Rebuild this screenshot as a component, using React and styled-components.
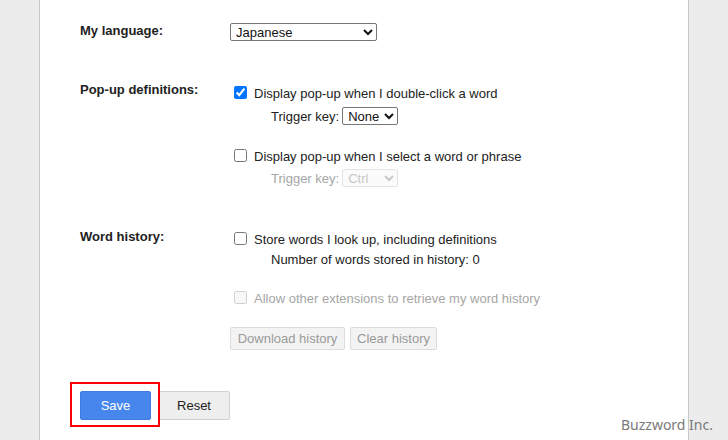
import React from 'react';
import styled, { createGlobalStyle } from 'styled-components';

const GlobalStyle = createGlobalStyle`
  html, body {
    margin: 0;
    padding: 0;
    background: #ececec;
  }
  body {
    font-family: "Liberation Sans", Arial, sans-serif;
    font-size: 13px;
    color: #222;
  }
`;

const App = () => {
  return (
    <>
      <GlobalStyle />
      <Page>
        <Panel>
          <Row>
            <Label>My language:</Label>
            <div>
              <Select width={147} defaultValue="ja">
                <option value="en">English</option>
                <option value="ja">Japanese</option>
              </Select>
            </div>
          </Row>

          <Row top={43}>
            <Label lift={2}>Pop-up definitions:</Label>
            <div>
              <CheckLine>
                <input type="checkbox" defaultChecked />
                <span>Display pop-up when I double-click a word</span>
              </CheckLine>
              <SubLine top={7}>
                Trigger key:
                <Select width={56} defaultValue="none">
                  <option value="none">None</option>
                  <option value="ctrl">Ctrl</option>
                </Select>
              </SubLine>

              <CheckLine top={22}>
                <input type="checkbox" />
                <span>Display pop-up when I select a word or phrase</span>
              </CheckLine>
              <SubLine top={6} disabled>
                Trigger key:
                <Select width={56} disabled defaultValue="ctrl">
                  <option value="ctrl">Ctrl</option>
                </Select>
              </SubLine>
            </div>
          </Row>

          <Row top={43}>
            <Label lift={1}>Word history:</Label>
            <div>
              <CheckLine>
                <input type="checkbox" />
                <span>Store words I look up, including definitions</span>
              </CheckLine>
              <SubLine top={5}>Number of words stored in history: 0</SubLine>

              <CheckLine top={22} disabled>
                <input type="checkbox" disabled />
                <span>Allow other extensions to retrieve my word history</span>
              </CheckLine>

              <HistoryButtons>
                <SmallButton width={115} disabled>Download history</SmallButton>
                <SmallButton width={87} disabled>Clear history</SmallButton>
              </HistoryButtons>
            </div>
          </Row>

          <Actions>
            <Highlight />
            <PrimaryButton>Save</PrimaryButton>
            <SecondaryButton>Reset</SecondaryButton>
          </Actions>
        </Panel>
        <Watermark>Buzzword Inc.</Watermark>
      </Page>
    </>
  );
};

export default App;

/* --- layout --- */

const Page = styled.div`
  position: relative;
  height: 440px;
  overflow: hidden;
  background: #ececec;
`;

const Panel = styled.div`
  box-sizing: border-box;
  margin: 0 39px;
  height: 440px;
  padding-top: 23px;
  background: #fff;
  border-left: 1px solid #c9c9c9;
  border-right: 1px solid #c9c9c9;
`;

const Row = styled.div`
  display: grid;
  grid-template-columns: 150px 1fr;
  padding-left: 40px;
  margin-top: ${p => p.top || 0}px;
`;

const Label = styled.div`
  font-weight: bold;
  line-height: 16px;
  color: #222;
  margin-top: ${p => -(p.lift || 0)}px;
`;

const CheckLine = styled.label`
  display: flex;
  align-items: center;
  height: 16px;
  margin-top: ${p => p.top || 0}px;
  color: ${p => (p.disabled ? '#a6a6a6' : '#222')};

  input {
    width: 13px;
    height: 13px;
    margin: 0 3px 0 4px;
  }

  span {
    margin-left: 4px;
    padding-top: 2px;
  }
`;

const SubLine = styled.div`
  display: flex;
  align-items: center;
  gap: 3px;
  min-height: 16px;
  margin-top: ${p => p.top || 0}px;
  margin-left: 41px;
  color: ${p => (p.disabled ? '#a6a6a6' : '#222')};
`;

const Select = styled.select`
  box-sizing: border-box;
  width: ${p => p.width}px;
  height: 18px;
  padding: 0 0 0 1px;
  font-family: "Liberation Sans", Arial, sans-serif;
  font-size: 13px;
  color: #111;
  background: #fff;
  border: 1px solid #767676;
  border-radius: 2px;

  &:disabled {
    color: #b0b0b0;
    border-color: #d8d8d8;
    background: #fafafa;
  }
`;

const HistoryButtons = styled.div`
  display: flex;
  gap: 5px;
  margin-top: 22px;
`;

const SmallButton = styled.button`
  box-sizing: border-box;
  width: ${p => p.width}px;
  height: 23px;
  padding: 0;
  font-family: "Liberation Sans", Arial, sans-serif;
  font-size: 13px;
  color: #9a9a9a;
  background: #f3f3f3;
  border: 1px solid #dcdcdc;
  border-radius: 2px;
`;

const Actions = styled.div`
  position: relative;
  display: flex;
  gap: 7px;
  margin-top: 41px;
  padding-left: 40px;
`;

const PrimaryButton = styled.button`
  box-sizing: border-box;
  width: 71px;
  height: 29px;
  font-family: "Liberation Sans", Arial, sans-serif;
  font-size: 13px;
  color: #fff;
  background: #4787ed;
  border: 1px solid #3f7ce0;
  border-radius: 2px;
`;

const SecondaryButton = styled.button`
  box-sizing: border-box;
  width: 72px;
  height: 29px;
  font-family: "Liberation Sans", Arial, sans-serif;
  font-size: 13px;
  color: #222;
  background: #eeeeee;
  border: 1px solid #d0d0d0;
  border-radius: 2px;
`;

/* red annotation frame around Save */
const Highlight = styled.div`
  position: absolute;
  left: 30px;
  top: -9px;
  width: 90px;
  height: 45px;
  box-sizing: border-box;
  border: 2px solid #f00;
  pointer-events: none;
`;

const Watermark = styled.div`
  position: absolute;
  right: 15px;
  bottom: 6px;
  font-family: "Noto Sans", "Open Sans", sans-serif;
  font-size: 14px;
  color: #7a7a7a;
`;
